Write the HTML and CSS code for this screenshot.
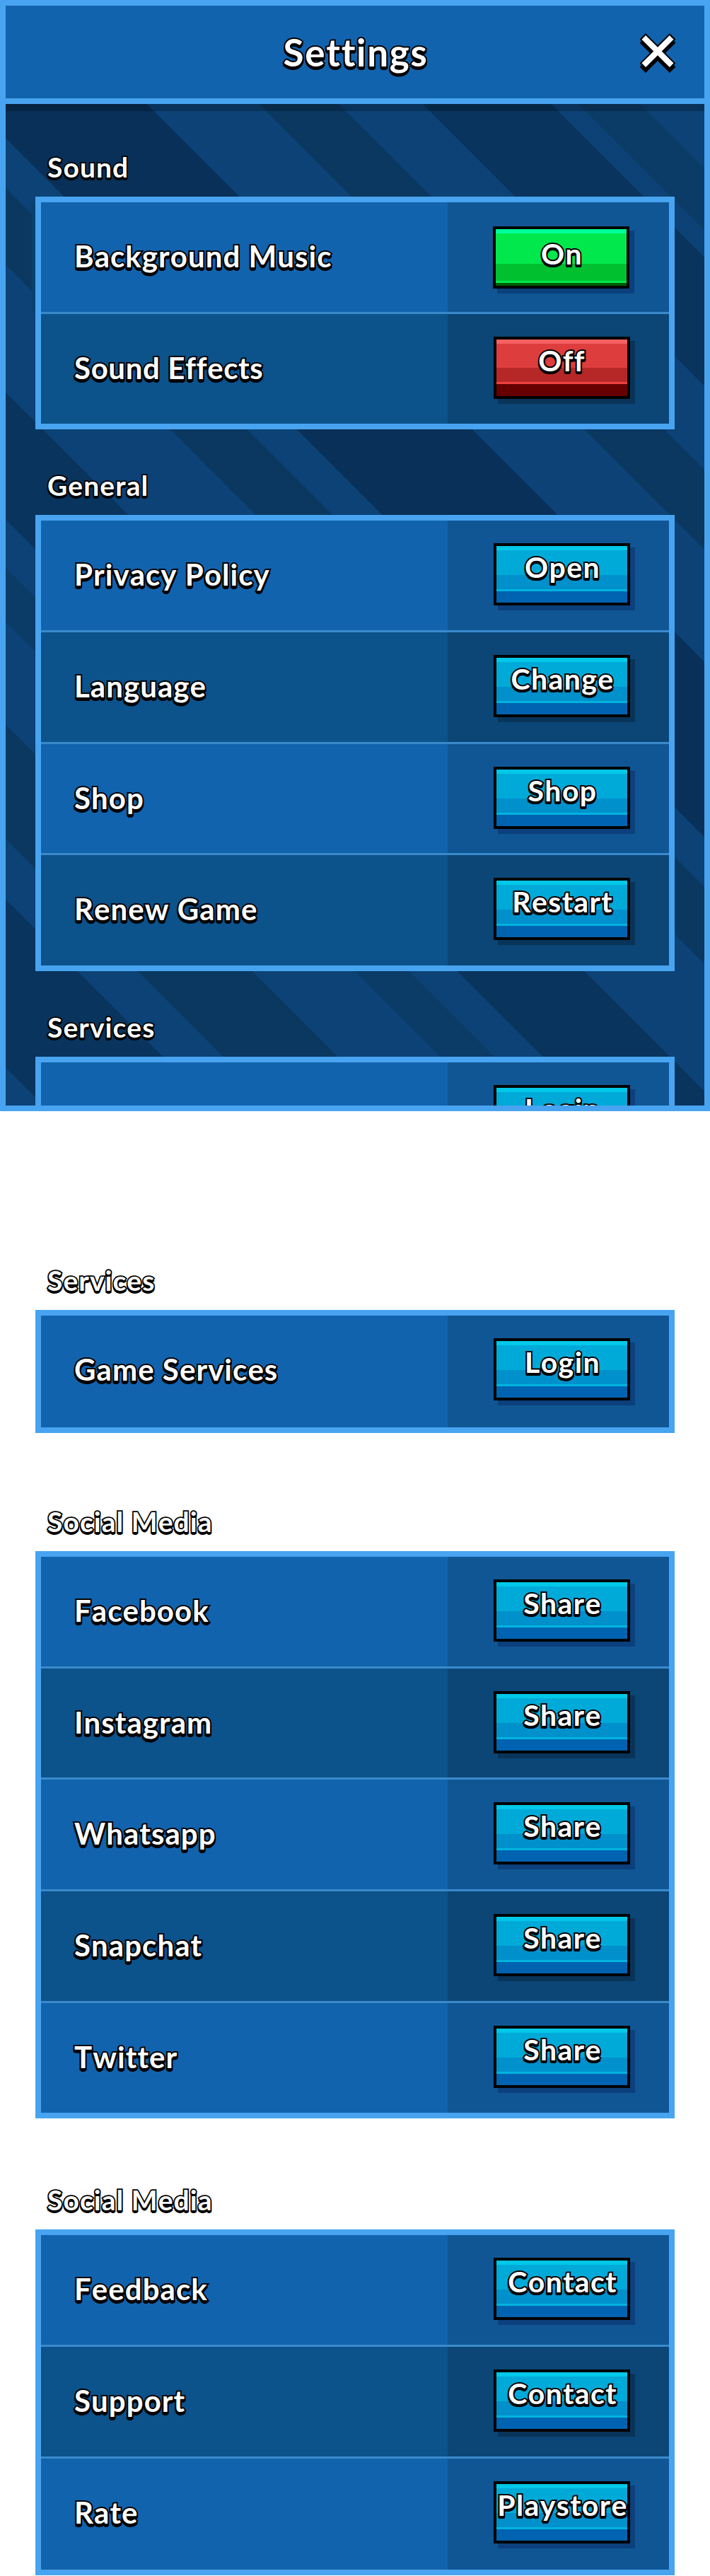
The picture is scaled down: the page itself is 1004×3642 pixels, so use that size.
FILE: index.html
```html
<!DOCTYPE html>
<html lang="en">
<head>
<meta charset="utf-8">
<title>Settings</title>
<link rel="stylesheet" href="styles.css">
</head>
<body>
<main class="window">
  <header class="window-header">
    <h1 class="window-title">Settings</h1>
    <svg class="close" viewBox="0 0 52 58" width="52" height="58" role="img" aria-label="Close">
      <path d="M4.8 10.3 47.2 52.7M47.2 10.3 4.8 52.7" stroke="#000" stroke-width="12"/>
      <path d="M4.8 5.3 47.2 47.7M47.2 5.3 4.8 47.7" stroke="#000" stroke-width="12"/>
      <path d="M6.3 6.8 45.7 46.2M45.7 6.8 6.3 46.2" stroke="#fff" stroke-width="8"/>
    </svg>
  </header>
  <div class="window-body">
    <section class="group">
      <h2 class="group-title">Sound</h2>
      <div class="panel panel-sound">
        <div class="row"><span class="name">Background Music</span><div class="action"><button class="btn btn-on">On</button></div></div>
        <div class="row"><span class="name name-tight">Sound Effects</span><div class="action"><button class="btn btn-off">Off</button></div></div>
      </div>
    </section>
    <section class="group">
      <h2 class="group-title">General</h2>
      <div class="panel panel-general">
        <div class="row"><span class="name">Privacy Policy</span><div class="action"><button class="btn">Open</button></div></div>
        <div class="row"><span class="name">Language</span><div class="action"><button class="btn">Change</button></div></div>
        <div class="row"><span class="name">Shop</span><div class="action"><button class="btn">Shop</button></div></div>
        <div class="row"><span class="name">Renew Game</span><div class="action"><button class="btn">Restart</button></div></div>
      </div>
    </section>
    <section class="group">
      <h2 class="group-title">Services</h2>
      <div class="panel panel-services">
        <div class="row"><span class="name">Game Services</span><div class="action"><button class="btn">Login</button></div></div>
      </div>
    </section>
  </div>
</main>
<div class="overflow">
  <section class="group">
    <h2 class="group-title">Services</h2>
    <div class="panel panel-services">
      <div class="row"><span class="name">Game Services</span><div class="action"><button class="btn">Login</button></div></div>
    </div>
  </section>
  <section class="group group-social">
    <h2 class="group-title">Social Media</h2>
    <div class="panel panel-social">
      <div class="row"><span class="name">Facebook</span><div class="action"><button class="btn">Share</button></div></div>
      <div class="row"><span class="name">Instagram</span><div class="action"><button class="btn">Share</button></div></div>
      <div class="row"><span class="name">Whatsapp</span><div class="action"><button class="btn">Share</button></div></div>
      <div class="row"><span class="name">Snapchat</span><div class="action"><button class="btn">Share</button></div></div>
      <div class="row"><span class="name">Twitter</span><div class="action"><button class="btn">Share</button></div></div>
    </div>
  </section>
  <section class="group group-support">
    <h2 class="group-title">Social Media</h2>
    <div class="panel panel-support">
      <div class="row"><span class="name">Feedback</span><div class="action"><button class="btn">Contact</button></div></div>
      <div class="row"><span class="name">Support</span><div class="action"><button class="btn">Contact</button></div></div>
      <div class="row"><span class="name">Rate</span><div class="action"><button class="btn">Playstore</button></div></div>
    </div>
  </section>
</div>
</body>
</html>
```
FILE: styles.css
```css
* { box-sizing: border-box; }

body {
  margin: 0;
  background: #fff;
  color: #fff;
  font-family: Lato, "Open Sans", sans-serif;
  font-weight: 700;
}

h1, h2 { margin: 0; }

.window-title, .group-title, .name, .btn {
  -webkit-text-stroke: 4px #000;
  paint-order: stroke fill;
  text-shadow: 0 5px 0 #000, -2px 3px 0 #000, 2px 3px 0 #000,
    -1.4px 4.4px 0 #000, 1.4px 4.4px 0 #000;
  letter-spacing: 1.05px;
  font-kerning: none;
  white-space: nowrap;
}

.window {
  display: flex;
  flex-direction: column;
  height: 1571px;
  border: 8px solid #48a4f0;
  overflow: hidden;
}

.window-header {
  flex: none;
  display: grid;
  grid-template-columns: 1fr auto 1fr;
  align-items: center;
  height: 139px;
  padding: 0 40px 4px;
  background: #1263ad;
  border-bottom: 8px solid #48a4f0;
}

.window-title {
  grid-column: 2;
  padding: 4px 0 0 2px;
  font-size: 53px;
  line-height: 62px;
  letter-spacing: 1.7px;
}

.close {
  grid-column: 3;
  justify-self: end;
  margin-top: 6px;
  fill: none;
}

.window-body {
  flex: 1;
  padding: 65px 42px 0;
  overflow: hidden;
  box-shadow: inset 0 10px 0 rgba(0, 0, 0, 0.23);
  --base: #0c4276;
  --deep: #093058;
  --navy: #09345d;
  --teal: #0a3860;
  background: linear-gradient(225deg,
    var(--base) 64.3px, #0b3b67 64.3px 125.9px,
    var(--base) 125.9px 153.4px, var(--navy) 153.4px 282.1px,
    var(--base) 282.1px 364.9px, var(--teal) 364.9px 444.8px,
    var(--base) 444.8px 557.9px, var(--deep) 557.9px 732.6px,
    var(--base) 732.6px 782.1px, var(--teal) 782.1px 859.8px,
    var(--base) 859.8px 987.1px, var(--navy) 987.1px 1113.7px,
    var(--base) 1113.7px 1161.8px, #0b3b67 1161.8px 1216.9px,
    var(--base) 1216.9px 1318.8px, var(--teal) 1318.8px 1434px,
    var(--base) 1434px 1494.1px, var(--navy) 1494.1px 1662.4px,
    var(--base) 1662.4px);
}

.group-title {
  height: 66px;
  padding-left: 17px;
  font-size: 39px;
  line-height: 48px;
  text-shadow: 0 4px 0 #000, -1.5px 3px 0 #000, 1.5px 3px 0 #000;
  -webkit-text-stroke-width: 3.6px;
}

.window .group + .group { margin-top: 55px; }

.overflow { padding: 215px 50px 0; }
.group-social { margin-top: 101px; }
.group-support { margin-top: 91px; }

.panel {
  --row: 155px;
  position: relative;
  display: flex;
  flex-direction: column;
  border: 8px solid #48a4f0;
}

.panel-sound { height: 329px; }
.panel-general { height: 645px; --row: 154.75px; }
.panel-services { height: 174px; }
.panel-social { height: 802px; --row: 154.7px; }
.panel-support { height: 489px; }

/* cast shadow beside the first sound row */
.panel-sound::before {
  content: "";
  position: absolute;
  left: -13px;
  top: 0;
  width: 5px;
  height: 156px;
  background: #07426c;
}

.row {
  display: grid;
  grid-template-columns: 1fr 313px;
  flex: none;
  height: calc(var(--row) + 3px);
  border-bottom: 3px solid #3a8acb;
  background: #1263ad;
}

.row:last-child {
  flex: 1;
  height: auto;
  border-bottom: 0;
}

.row:nth-child(even) { background: #0c528b; }

.name {
  padding: 51px 0 0 47px;
  font-size: 42px;
  line-height: 50px;
}

.window .panel-services .name { padding-top: 53px; }

.name-tight { letter-spacing: 0.6px; }

.action {
  padding: 32px 0 0 65px;
  background: #105695;
}

.row:nth-child(even) .action { background: #0b4677; }

.btn {
  display: flex;
  justify-content: center;
  width: 193px;
  height: 88px;
  padding: 6px 0 0 2px;
  border: 4px solid #000;
  color: inherit;
  font: inherit;
  font-size: 41px;
  font-kerning: none;
  letter-spacing: 1.4px;
  line-height: 48px;
  overflow: hidden;
  background: linear-gradient(
    #00c8e8 6px, #00aad8 6px 41px, #0090cb 41px 61px,
    #00b4df 61px 64px, #0063b1 64px);
  box-shadow: 6.5px 6.5px 0 0.5px #0b407d;
  text-shadow: 0 4.2px 0 #000, -1.8px 2.6px 0 #000, 1.8px 2.6px 0 #000,
    -1.2px 3.8px 0 #000, 1.2px 3.8px 0 #000;
}

.row:nth-child(even) .btn { box-shadow: 6.5px 6.5px 0 0.5px #093459; }

.btn-on {
  margin: 1.5px 0 0 -1px;
  padding-top: 11px;
  background: linear-gradient(
    #00ff9c 6px, #00e84c 6px 49px, #00c030 49px 73px,
    #00e84c 73px 76px, #005c00 76px);
}

.btn-off {
  padding-left: 0;
  background: linear-gradient(
    #f66163 6px, #dd3d3d 6px 40px, #b62828 40px 60px,
    #f04040 60px 63px, #660000 63px);
}
```
